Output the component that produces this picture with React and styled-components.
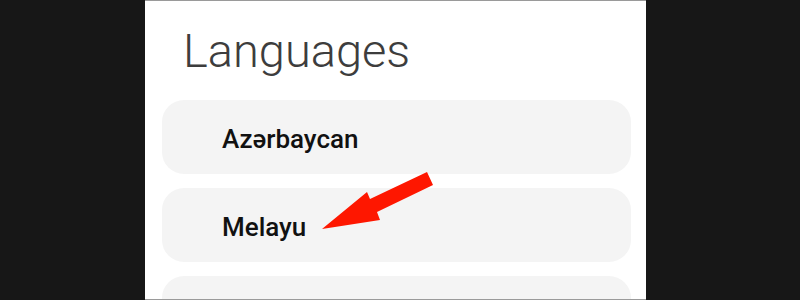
import React from "react";
import styled, { createGlobalStyle } from "styled-components";

const GlobalStyle = createGlobalStyle`
  html, body {
    margin: 0;
    padding: 0;
    background: #171717;
    overflow: hidden;
  }
`;

const languages = ["Azərbaycan", "Melayu", ""];

function App() {
  return (
    <>
      <GlobalStyle />
      <Frame>
        <Panel>
          <Title>Languages</Title>
          <List>
            {languages.map((name, i) => (
              <Item key={i}>{name}</Item>
            ))}
          </List>
          {/* red arrow pointing at Melayu */}
          <Arrow width="115" height="61" viewBox="0 0 115 61">
            <polygon
              points="107,2 113,15 57,42 60,50 2,59 47,22 50,29"
              fill="#fe1700"
            />
          </Arrow>
        </Panel>
      </Frame>
    </>
  );
}

const Frame = styled.div`
  width: 800px;
  height: 300px;
  background: #171717;
  display: flex;
  justify-content: flex-start;
  padding-left: 145px;
  box-sizing: border-box;
  overflow: hidden;
`;

const Panel = styled.div`
  position: relative;
  width: 501px;
  height: 300px;
  background: #ffffff;
  border-top: 1px solid #9a9a9a;
  border-bottom: 1px solid #9a9a9a;
  box-sizing: border-box;
  padding: 22px 15px 0 17px;
  overflow: hidden;
`;

const Title = styled.h1`
  margin: 0 0 21px 21px;
  font-family: Roboto, "Liberation Sans", sans-serif;
  font-weight: 300;
  font-size: 47px;
  line-height: 56px;
  color: #3d3d3d;
`;

const List = styled.div`
  display: flex;
  flex-direction: column;
  gap: 14px;
`;

const Item = styled.div`
  height: 74px;
  box-sizing: border-box;
  padding: 24px 0 0 60px;
  border-radius: 22px;
  background: #f4f4f4;
  font-family: Roboto, "Liberation Sans", sans-serif;
  font-weight: 500;
  font-size: 26px;
  line-height: 30px;
  color: #111111;
`;

const Arrow = styled.svg`
  position: absolute;
  left: 175px;
  top: 169px;
`;

export default App;
